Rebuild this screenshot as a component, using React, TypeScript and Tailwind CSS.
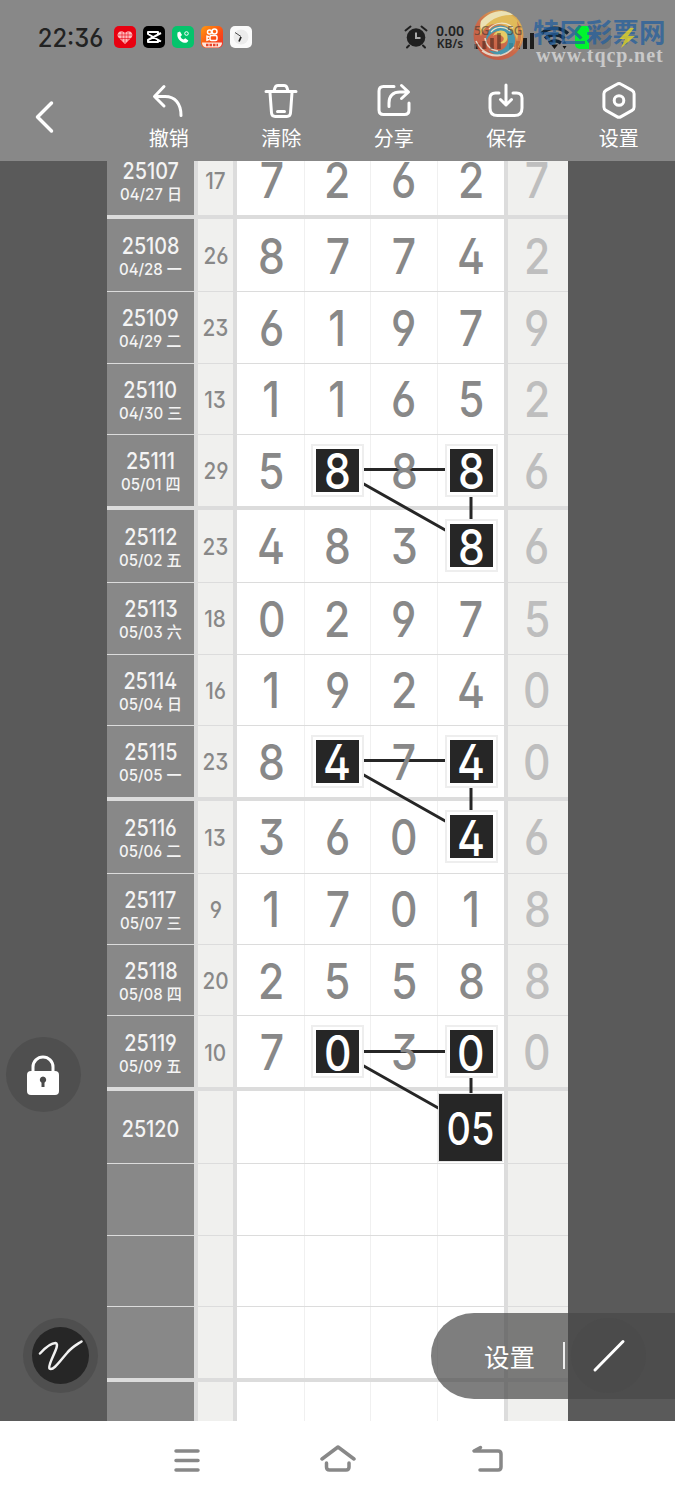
import React from 'react';

interface Draw {
  issue: string;
  date?: string;
  sum?: string;
  digits: string[];
  last?: string;
  marked?: number[];
}

const draws: Draw[] = [
  { issue: '25107', date: '04/27 日', sum: '17', digits: ['7', '2', '6', '2'], last: '7' },
  { issue: '25108', date: '04/28 一', sum: '26', digits: ['8', '7', '7', '4'], last: '2' },
  { issue: '25109', date: '04/29 二', sum: '23', digits: ['6', '1', '9', '7'], last: '9' },
  { issue: '25110', date: '04/30 三', sum: '13', digits: ['1', '1', '6', '5'], last: '2' },
  { issue: '25111', date: '05/01 四', sum: '29', digits: ['5', '8', '8', '8'], last: '6', marked: [1, 3] },
  { issue: '25112', date: '05/02 五', sum: '23', digits: ['4', '8', '3', '8'], last: '6', marked: [3] },
  { issue: '25113', date: '05/03 六', sum: '18', digits: ['0', '2', '9', '7'], last: '5' },
  { issue: '25114', date: '05/04 日', sum: '16', digits: ['1', '9', '2', '4'], last: '0' },
  { issue: '25115', date: '05/05 一', sum: '23', digits: ['8', '4', '7', '4'], last: '0', marked: [1, 3] },
  { issue: '25116', date: '05/06 二', sum: '13', digits: ['3', '6', '0', '4'], last: '6', marked: [3] },
  { issue: '25117', date: '05/07 三', sum: '9', digits: ['1', '7', '0', '1'], last: '8' },
  { issue: '25118', date: '05/08 四', sum: '20', digits: ['2', '5', '5', '8'], last: '8' },
  { issue: '25119', date: '05/09 五', sum: '10', digits: ['7', '0', '3', '0'], last: '0', marked: [1, 3] },
  { issue: '25120', digits: ['', '', '', '05'] },
  { issue: '', digits: ['', '', '', ''] },
  { issue: '', digits: ['', '', '', ''] },
  { issue: '', digits: ['', '', '', ''] },
  { issue: '', digits: ['', '', '', ''] },
];

// Every fourth row closes a block with a thick rule
const rowHeights = ['h-[75px] border-b-4', 'h-[73px] border-b', 'h-[71.75px] border-b', 'h-[71px] border-b'];
const colWidths = ['w-[68px] border-r pl-0.5', 'w-[66px] border-r', 'w-[67px] border-r', 'w-[66px]'];

const Digit: React.FC<{ value: string; marked?: boolean }> = ({ value, marked }) => {
  if (value === '05') {
    return (
      <div className="relative z-20 mr-0.5 flex h-[67px] w-[63px] shrink-0 items-center justify-center bg-[#262626] outline outline-[#e6e6e6]">
        <span className="inline-block scale-x-[.84] pt-0.5 text-[45px] leading-none font-medium text-white">05</span>
      </div>
    );
  }
  if (marked) {
    return (
      <div className="relative z-20 flex size-[53px] shrink-0 items-center justify-center border-2 border-[#eee] bg-white">
        <div className="flex size-[43px] items-center justify-center bg-[#262626]">
          <span className="inline-block scale-x-[.87] pt-[3px] text-[49px] leading-none font-medium text-white">{value}</span>
        </div>
      </div>
    );
  }
  return (
    <span className="relative z-20 inline-block scale-x-[.87] pt-0.5 text-[49px] leading-none font-medium text-[#888]">
      {value}
    </span>
  );
};

const Row: React.FC<{ draw: Draw; index: number }> = ({ draw, index }) => (
  <div className={`flex shrink-0 border-[#dcdcdc] ${rowHeights[index % 4]}`}>
    <div className="flex w-[91px] flex-col items-center justify-center border-r-4 border-[#dcdcdc] bg-[#888] pt-[3px] text-[#f4f4f4]">
      <span className="scale-x-[.86] text-[23px] leading-[26px] font-medium">{draw.issue}</span>
      {draw.date && (
        <span className="scale-x-[.97] text-[15.5px] leading-[21px] font-medium whitespace-nowrap">{draw.date}</span>
      )}
    </div>
    <div className="flex w-[39px] items-center justify-center border-r-4 border-[#dcdcdc] bg-[#f0f0ee]">
      <span className="scale-x-[.9] pt-[3px] text-[23px] leading-none font-medium text-[#888]">{draw.sum}</span>
    </div>
    {draw.digits.map((d, i) => (
      <div key={i} className={`flex items-center justify-center border-[#f0f0f0] bg-white ${colWidths[i]}`}>
        <Digit value={d} marked={draw.marked?.includes(i)} />
      </div>
    ))}
    <div className="flex w-16 items-center justify-center border-l-4 border-[#dcdcdc] bg-[#f0f0ee] pr-0.5">
      <span className="scale-x-[.87] pt-0.5 text-[49px] leading-none font-medium text-[#bebebe]">{draw.last}</span>
    </div>
  </div>
);

const TrendLines: React.FC = () => (
  <svg className="absolute top-0 left-0 z-10" width="461" height="1260" fill="none" stroke="#262626" strokeWidth="3">
    <path d="M255 308.5H339M364 333V360M255 322L340 370" />
    <path d="M255 599.5H339M364 624V651M255 613L340 661" />
    <path d="M255 890.5H339M364 915V934M255 904L333 948" />
  </svg>
);

const stroke = { fill: 'none', stroke: '#fff', strokeWidth: 3, strokeLinecap: 'round', strokeLinejoin: 'round' } as const;

const tools = [
  { label: '撤销', icon: <path d="M13 4.500 3.500 14.500l9.500 9.500M4.500 14.500H14c10 0 16 7 16 19" /> },
  {
    label: '清除',
    icon: <path d="M3 9.500H33M7 10.500 8.500 31c.2 2.500 1.300 3.500 3.700 3.500H23.800c2.400 0 3.500-1 3.700-3.500L29 10.500M11 9l1-3.300C12.500 4.300 13.300 3.500 15 3.500h6c1.700 0 2.500.8 3 2.200L25 9M14.500 29.500h7" />,
  },
  {
    label: '分享',
    icon: <path d="M18 4.500H7.500C4.500 4.500 3 6 3 9v19c0 3 1.500 4.500 4.500 4.500h21c3 0 4.500-1.500 4.500-4.500V21M13 24.500V21c0-7 4-11 11-11h8M25.500 3.500l7 6.500-7 6.500" />,
  },
  {
    label: '保存',
    icon: <path d="M11 11H7.500C3.500 11 2 12.500 2 16v10c0 5 2.500 7.500 7.500 7.500h17c5 0 7.500-2.500 7.500-7.500V16c0-3.500-1.500-5-5.500-5H25M18 3V23M12.500 17.500 18 23l5.500-5.500" />,
  },
  {
    label: '设置',
    icon: (
      <>
        <path d="M15.900 2.200a4 4 0 0 1 4.200 0l11 6.200a4 4 0 0 1 2 3.500v13a4 4 0 0 1-2 3.500l-11 6.200a4 4 0 0 1-4.200 0l-11-6.200a4 4 0 0 1-2-3.500v-13a4 4 0 0 1 2-3.500z" />
        <circle cx="18" cy="18.500" r="4.800" />
      </>
    ),
  },
];

const AppBadges: React.FC = () => (
  <div className="ml-[10px] flex gap-[7px]">
    <svg width="22" height="22" viewBox="0 0 22 22">
      <rect width="22" height="22" rx="5" fill="#e80010" />
      <path d="M11 18 4.500 11.500c-3-3.500 2-9 6.500-4.500 4.500-4.500 9.500 1 6.500 4.500z" fill="#ffb9bb" />
      <path d="M4 9h14M5 12.500h12M8 5.500v9M11 7v10M14 5.500v9" stroke="#e80010" strokeWidth=".6" />
    </svg>
    <svg width="22" height="22" viewBox="0 0 22 22" fill="none" stroke="#fff" strokeWidth="2" strokeLinejoin="round">
      <rect width="22" height="22" rx="5" fill="#000" stroke="none" />
      <path d="M18 7 5 14v2h10v-2.500M18 15.500 5 8V6h10v2.500" />
    </svg>
    <svg width="22" height="22" viewBox="0 0 22 22">
      <rect width="22" height="22" rx="5" fill="#05c46c" />
      <path d="M5.500 6.500 8 5.500l2 3.500-1.500 1.500c.5 1.500 1.500 2.500 3 3l1.800-1.300 3 2.300c-.5 2-2 2.500-4 2.300C8.500 16 5.500 13 5.300 9z" fill="#fff" />
      <circle cx="14.500" cy="7.500" r="1.800" fill="none" stroke="#fff" />
    </svg>
    <svg width="22" height="22" viewBox="0 0 22 22" fill="none" stroke="#fff" strokeWidth="1.500">
      <defs>
        <linearGradient id="flame" x1="0" y1="0" x2="1" y2="1">
          <stop stopColor="#ff9a10" />
          <stop offset=".6" stopColor="#fb4a14" />
          <stop offset="1" stopColor="#f0302a" />
        </linearGradient>
      </defs>
      <rect width="22" height="22" rx="5" fill="url(#flame)" stroke="none" />
      <circle cx="8.500" cy="6" r="2" />
      <circle cx="13.500" cy="5.500" r="2.500" />
      <rect x="9" y="9.500" width="7" height="5" rx="1.500" />
      <path d="m8.500 11-2.500-.800v4l2.500-.800" />
      <path d="M1 16.500h20c0 3-2 5-5 5H6c-3 0-5-2-5-5z" fill="#ffe4d8" stroke="none" />
      <path d="M5 19h12" stroke="#e8442c" strokeWidth="2.500" strokeDasharray="2.500 1" />
    </svg>
    <svg width="22" height="22" viewBox="0 0 22 22" fill="none" stroke="#222">
      <rect width="22" height="22" rx="5" fill="#fafafa" stroke="none" />
      <circle cx="11" cy="11" r="7.500" fill="#ececec" stroke="none" />
      <path d="m11 11-2 4.500" strokeWidth="1.800" />
      <path d="M11 10.500 5 6.500" strokeWidth=".8" />
    </svg>
  </div>
);

const StatusIcons: React.FC = () => (
  <div className="ml-auto flex items-center">
    <svg width="24" height="26" viewBox="0 0 24 26" fill="none" stroke="#1f1f1f" strokeWidth="2" strokeLinecap="round">
      <circle cx="12" cy="13.500" r="9.300" fill="#1f1f1f" stroke="none" />
      <path d="M1.500 6.500 6.500 2.500M22.500 6.500 17.500 2.500M5 21.500l-2 2M19 21.500l2 2" />
      <path d="M12 8.500v5.500h4.500" stroke="#aaa" strokeLinecap="butt" />
    </svg>
    <div className="ml-[7px] flex w-[30px] flex-col items-center text-[14px] leading-[13px] font-semibold text-[#222]">
      <span className="font-['Noto_Sans']">0.00</span>
      <span className="font-['Noto_Sans'] text-[12px]">KB/s</span>
    </div>
    <svg className="ml-[9px]" width="201" height="30" viewBox="474 22 201 30">
      <g fill="#1d1d1d">
        <path d="M476 43h4v6h-4zM483 41h4v8h-4zM490 38h4v11h-4zM497 33h4v16h-4z" />
        <path d="M509 43h4v6h-4zM516 41h4v8h-4zM523 38h4v11h-4zM530 33h4v16h-4z" />
      </g>
      <g fill="none" stroke="#102334" strokeWidth="3.500">
        <path d="M541.500 33.500c8-7 18.500-7 26.500 0M545 38.500c6-5 13.500-5 19.500 0M549 43c4-3 8-3 12 0" />
      </g>
      <path d="m554.500 49-3.500-4.500h7zM562.500 43.500l2-2.500 2 2.500zM562.500 46l2 3 2-3z" fill="#111" />
      <path d="M589 26h-9a5 5 0 0 0-5 5v13a5 5 0 0 0 5 5h9z" fill="#00f52d" />
      <path d="M589 26h17a5 5 0 0 1 5 5v13a5 5 0 0 1-5 5h-17z" fill="#777" />
    </svg>
  </div>
);

const Watermark: React.FC = () => (
  <div className="absolute top-[8px] left-[473px] z-30 flex">
    <svg width="52" height="54" viewBox="0 0 52 54" fill="none">
      <defs>
        <linearGradient id="rim" x1="0" y1="1" x2=".8" y2="0">
          <stop stopColor="#c94a35" />
          <stop offset=".5" stopColor="#d9653f" />
          <stop offset="1" stopColor="#eec04a" />
        </linearGradient>
      </defs>
      <g opacity=".84">
        <circle cx="25.500" cy="27" r="25" fill="url(#rim)" />
        <path d="M8 16C15 4 31 0 42 10c9 8 9 21 3 30 0-14-8-23-19-24-9-1-16 4-18 12-2-4-2-8 0-12z" fill="#f3c552" />
        <path d="M8 13C17 2 32 0 40 7c-12-1-24 4-31 15-2-3-2-6-1-9z" fill="#fff2bd" />
        <path d="M44 13c7 10 6 24-4 31 5-9 6-19 4-31z" fill="#de7a42" />
        <path d="M14 27c3-10 16-13 24-5 8 9 4 21-8 25-6 1-11-1-15-5 10 4 20-1 20-10-1-9-12-12-18-5-2 2-3 4-3 6-1-2-1-4 0-6z" fill="#3c9bb3" />
        <path d="M20 28c2-6 11-8 14-2 2 6-2 11-8 9 4-1 6-4 4-6-3-3-7-3-10-1z" fill="#f8d95f" />
        <path d="M16 21c6-7 17-8 24-1M18 24c5-6 13-6 19-1" stroke="#fff6d8" strokeWidth="1.200" />
        <path d="M3 33c5 10 13 15 24 14M9 43c10 7 22 7 32-4M12 30c1 8 6 12 13 13" stroke="#f6e2cf" strokeWidth="1.500" />
      </g>
      <g fill="#4a3a30" fillOpacity=".65" fontFamily="Noto Sans" fontSize="12" fontWeight="500">
        <text x="1" y="27">5G</text>
        <text x="34" y="27">5G</text>
      </g>
      <path d="M3 36v5M11 33v8M19 30v11M26 25v16" stroke="#222" strokeOpacity=".4" strokeWidth="3.500" />
    </svg>
    <div className="ml-2 pt-[7px]">
      <div className="font-['Noto_Sans_CJK_SC'] text-[26.5px] leading-[32px] font-bold whitespace-nowrap text-[#255f9d]/75">
        特区彩票网
      </div>
      <div className="ml-[3px] pt-px font-['Liberation_Serif'] text-[20px] leading-[14px] font-bold tracking-[.9px] text-[#c9c9c9]">
        www.tqcp.net
      </div>
    </div>
    <svg className="absolute top-[19px] left-[143px]" width="22" height="22" viewBox="616 27 22 22">
      <path d="m630 28-11 11h6l-4 9 14-12h-7l6-8z" fill="#eedb1c" fillOpacity=".75" />
    </svg>
  </div>
);

const Header: React.FC = () => (
  <header className="relative h-[161px] shrink-0 bg-[#888]">
    <div className="flex h-[74px] items-center pl-[35px]">
      <span className="w-[69px] origin-left scale-x-[.95] pt-[3px] pl-[3px] text-[25px] font-medium text-[#222]">22:36</span>
      <AppBadges />
      <StatusIcons />
    </div>
    <Watermark />
    <div className="flex">
      <div className="flex w-[112.5px] pt-[25px] pl-[34px]">
        <svg width="22" height="36" viewBox="0 0 22 36" {...stroke} strokeWidth={3.5}>
          <path d="M17.500 4 3.500 18l14 14" />
        </svg>
      </div>
      {tools.map((tool) => (
        <div key={tool.label} className="flex w-[112.5px] flex-col items-center pt-[8px]">
          <svg width="36" height="37" viewBox="0 0 36 37" {...stroke}>
            {tool.icon}
          </svg>
          <span className="mt-[5px] font-['Noto_Sans_CJK_SC'] text-[20px] leading-7 text-white">{tool.label}</span>
        </div>
      ))}
    </div>
  </header>
);

const FloatingControls: React.FC = () => (
  <>
    <div className="absolute top-[1037px] left-[5.500px] z-30 flex size-[75px] items-center justify-center rounded-full bg-[#4f4f4f]">
      <svg width="34" height="42" viewBox="0 0 34 42">
        <path d="M7 18v-5a10 10 0 0 1 20 0v5" fill="none" stroke="#fff" strokeWidth="3" />
        <rect x="1" y="17" width="32" height="24" rx="4" fill="#fff" />
        <path d="M17 22.500a3.300 3.300 0 0 0-1.500 6.200V33h3v-4.300a3.300 3.300 0 0 0-1.500-6.200z" fill="#4a4a4a" />
      </svg>
    </div>
    <div className="absolute top-[1318px] left-[22.500px] z-30 flex size-[75px] items-center justify-center rounded-full bg-[#4f4f4f]">
      <div className="flex size-[57px] items-center justify-center rounded-full bg-[#262626]">
        <svg width="46" height="34" viewBox="37 1339 46 34" fill="none" stroke="#f2f2f2" strokeWidth="2.500" strokeLinecap="round">
          <path d="M40 1353.500C45 1348 50 1343 55.500 1343C61.500 1344 47 1364 49.500 1368.500C53 1371.500 60 1361 67 1353C72 1347 77 1344.500 81.500 1341.500" />
        </svg>
      </div>
    </div>
    <div className="absolute top-[1312.500px] right-0 z-30 flex h-[86px] w-[244px] items-center rounded-l-full bg-[#474747]/70 pl-[53px]">
      <span className="font-['Noto_Sans_CJK_SC'] text-[25.500px] leading-none text-white">设置</span>
      <span className="ml-[28px] h-[27px] w-0.5 bg-[#eee]" />
      <div className="ml-[6px] flex size-[75px] items-center justify-center rounded-full bg-[#444]/20">
        <svg width="34" height="34" {...stroke}>
          <path d="M3 31 31 2.500" />
        </svg>
      </div>
    </div>
  </>
);

const NavBar: React.FC = () => (
  <nav className="flex h-[79px] shrink-0 items-start justify-center gap-[114px] bg-white pt-[22px]">
    <svg width="36" height="34" fill="none" stroke="#888" strokeWidth="3.500" strokeLinecap="round">
      <path d="M6 8H28M6 17.500H28M6 27H28" />
    </svg>
    <svg width="36" height="34" fill="none" stroke="#888" strokeWidth="3.500" strokeLinecap="round" strokeLinejoin="round">
      <path d="M2 16 18 4l16 12M6.500 20V24c0 2 1 3 3 3h16.500c2 0 3-1 3-3v-4" />
    </svg>
    <svg width="36" height="34" fill="none" stroke="#888" strokeWidth="3.500" strokeLinecap="round" strokeLinejoin="round">
      <path d="M10.500 4.500 4 8H28c2 0 3 1 3 3V24c0 2-1 3-3 3H10" />
    </svg>
  </nav>
);

const App: React.FC = () => {
  return (
    <div className="relative flex h-[1500px] w-[675px] flex-col overflow-hidden bg-white font-['Inter','Noto_Sans_CJK_SC',sans-serif] [font-feature-settings:'ss01','cv03','cv04']">
      <Header />
      <main className="flex h-[1260px] shrink-0 justify-start overflow-hidden bg-[#5a5a5a] pl-[107px]">
        <div className="relative h-[1260px] w-[461px] overflow-hidden">
          {/* The first row is partly scrolled under the header */}
          <div className="-mt-[17px] flex flex-col">
            {draws.map((draw, i) => (
              <Row key={i} draw={draw} index={i} />
            ))}
          </div>
          <TrendLines />
        </div>
      </main>
      <FloatingControls />
      <NavBar />
    </div>
  );
};

export default App;
